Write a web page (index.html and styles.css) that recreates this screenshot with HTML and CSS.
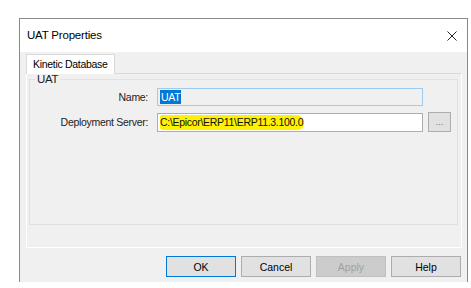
FILE: index.html
```html
<!DOCTYPE html>
<html lang="en">
<head>
  <meta charset="UTF-8">
  <title>UAT Properties</title>
  <link rel="stylesheet" href="styles.css">
</head>
<body>
  <div class="dialog">
    <div class="titlebar">
      <span class="title">UAT Properties</span>
      <svg class="close" viewBox="0 0 10 10"><path d="M0.5 0.5 L9.5 9.5 M9.5 0.5 L0.5 9.5"/></svg>
    </div>

    <div class="content">
      <div class="tabs">
        <div class="tab">Kinetic Database</div>
      </div>
      <div class="panel">
        <fieldset class="group">
          <legend>UAT</legend>
          <div class="form">
            <label>Name:</label>
            <div class="field readonly"><span class="selected">UAT</span></div>
            <span></span>

            <label>Deployment Server:</label>
            <div class="field"><span class="marker">C:\Epicor\ERP11\ERP11.3.100.0</span></div>
            <button class="browse">...</button>
          </div>
        </fieldset>
      </div>

      <!-- Przyciski -->
      <div class="actions">
        <button class="btn default">OK</button>
        <button class="btn">Cancel</button>
        <button class="btn" disabled>Apply</button>
        <button class="btn">Help</button>
      </div>
    </div>
  </div>
</body>
</html>
```

FILE: styles.css
```css
body {
  margin: 0;
  background: #ffffff;
  font-family: 'Liberation Sans', Arial, sans-serif;
  font-size: 10.5px;
  letter-spacing: -0.3px;
  color: #000;
}

.dialog {
  margin: 18px 0 0 19px;
  width: 447px;
  height: 263px;
  border: 1px solid #8a8a8a;
  border-bottom: none;
  background: #f0f0f0;
  overflow: hidden;
}

.titlebar {
  height: 33px;
  background: #fff;
  display: flex;
  align-items: center;
  justify-content: space-between;
  padding: 0 10px 0 7px;
}

.title {
  font-size: 11.5px;
  letter-spacing: -0.2px;
  padding-bottom: 2px;
}

.close {
  width: 10px;
  height: 10px;
  stroke: #222;
  stroke-width: 1;
  fill: none;
}

.content {
  padding: 2px 5px 0 6px;
}

.tabs {
  display: flex;
}

.tab {
  width: 89px;
  height: 20px;
  line-height: 19px;
  padding-left: 6px;
  white-space: nowrap;
  background: #fff;
  border: 1px solid #d9d9d9;
  border-bottom: none;
  box-sizing: border-box;
  position: relative;
  z-index: 1;
}

.panel {
  height: 175px;
  border: 1px solid #fff;
  border-top-color: #d9d9d9;
  box-sizing: border-box;
  padding: 0 3px 0 2px;
  margin-top: -1px;
  width: 436px;
}

.group {
  margin: 0;
  padding: 3px 0 0 0;
  height: 151px;
  box-sizing: border-box;
  border: 1px solid #dfdfdf;
  border-top-color: #e2e2e2;
}

.group legend {
  margin-left: 5px;
  padding: 0 2px;
  font-size: 11.5px;
  line-height: 11px;
  color: #222;
}

.form {
  display: grid;
  grid-template-columns: 118px 266px 23px;
  column-gap: 9px;
  row-gap: 6px;
  align-items: center;
}

.form label {
  text-align: right;
  color: #222;
}

.field {
  height: 19px;
  border: 1px solid #adadad;
  background: #fff;
  box-sizing: border-box;
  display: flex;
  align-items: center;
  padding-left: 2px;
  color: #111;
}

.field.readonly {
  background: #f0f0f0;
  border-color: #9fcbef;
  height: 18px;
}

.selected {
  background: #0078d7;
  color: #fff;
  padding: 0 1px;
  line-height: 14px;
}

.marker {
  background: #fff200;
  line-height: 15px;
  border-radius: 2px 8px 6px 3px;
  padding-right: 1px;
}

.browse {
  width: 23px;
  height: 20px;
  margin-left: -4px;
  padding: 0;
  font: inherit;
  font-size: 9px;
  color: #777;
  background: #e1e1e1;
  border: 1px solid #adadad;
}

.actions {
  display: flex;
  justify-content: flex-end;
  gap: 5px;
  padding: 8px 1px 0 0;
}

.btn {
  width: 70px;
  height: 21px;
  padding: 0;
  font: inherit;
  background: #e1e1e1;
  border: 1px solid #adadad;
  color: #000;
}

.btn.default {
  border-color: #0078d7;
}

.btn:disabled {
  background: #cccccc;
  border-color: #bfbfbf;
  color: #a0a0a0;
}
```
